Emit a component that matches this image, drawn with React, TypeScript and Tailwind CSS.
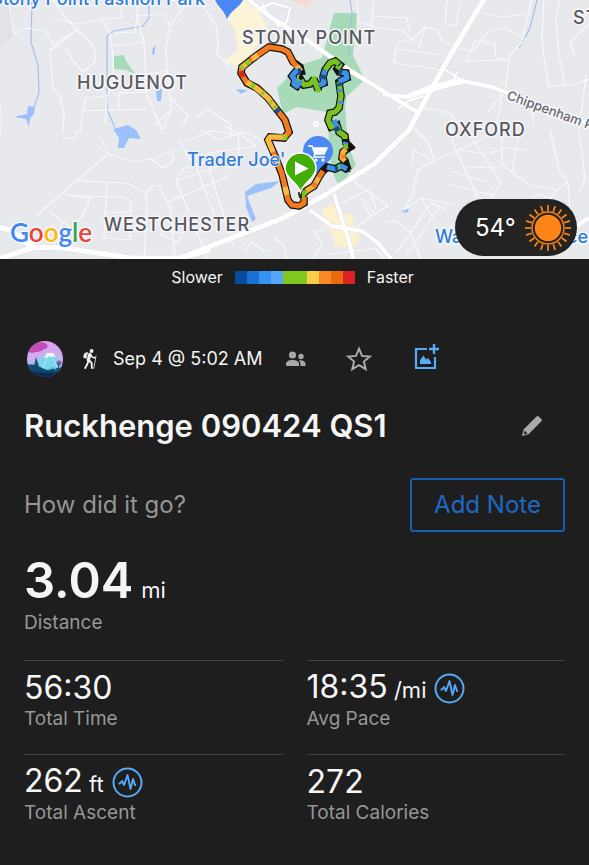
import type { ReactNode } from "react";

const minorRoads = [
  "M8 -2L12 22L14 34L27 28L45 31L54 44L77 30L64 16L52 -2",
  "M54 44L50 51L53 88L60 97L64 112L63 132",
  "M50 51L77 30L90 42L96 52L95 62L83 72L72 60L67 48",
  "M54 18L78 24L102 19L121 18L122 -2M102 19L110 33L113 55L114 80L107 96",
  "M138 -2L137 16L164 14L170 26L182 10L188 -2M137 16L135 32L113 33M137 16L144 42L113 46",
  "M144 42L147 95L162 130M170 26L166 48L167 70L171 111L162 130M147 74L171 70",
  "M119 109L119 93L147 92M82 111L148 109M80 132L85 98L107 96L105 124",
  "M171 98L188 115L181 128M171 111L154 125",
  "M202 5L216 25L218 42L217 54L230 66M196 118L207 109L231 124L230 138",
  "M100 138L108 154L76 181L35 217M108 154L134 162L156 158L171 151L174 160L163 168L150 158",
  "M76 181L127 183L146 193L147 208L144 259M70 196L123 197L131 201L130 240L104 238L107 183",
  "M104 213L131 212M98 222L132 225M65 194L90 198L83 214L73 229L50 212M62 220L60 239",
  "M147 192L153 185L160 186L170 208L175 259M168 202L231 175",
  "M184 168L176 181L183 198L208 259",
  "M184 168L207 162L233 246M176 181L222 165M196 166L220 230M161 234L178 243L183 233L163 230Z",
  "M63 138L75 138L78 131M178 138L190 160L215 152L256 146M185 142L210 131L240 134L256 146",
  "M202 130L218 140L244 132L262 140M244 252L251 242L266 252M275 238L284 245L287 259",
  "M357 -2L358 22L375 27L403 31L412 40L425 27L437 30L443 42L472 52",
  "M374 -2L371 26M372 16L407 18L410 31M447 -2L445 24L456 26L460 2M425 27L418 49",
  "M412 40L399 42L396 48L394 63L437 69M398 49L442 55M480 13L503 17L527 14",
  "M472 52L479 43L489 31L505 28L525 39M466 60L476 40L495 44L496 58L507 60M462 61L507 60",
  "M532 -2L522 42L510 55L505 90L488 112M544 -2L542 36L544 58L549 87L576 84L589 79",
  "M560 -2L556 18L559 54L565 86M575 57L570 42L589 24M586 75L581 115",
  "M424 108L450 113L457 123M502 94L497 124L505 137M507 95L529 98L534 122",
  "M412 126L429 143L434 161L418 170L412 195L404 210M434 161L480 140L497 132",
  "M412 165L413 150L431 159M451 128L453 143L480 202M459 150L487 154L505 148L526 150",
  "M471 137L484 156L501 183L484 207M453 172L487 182M447 184L492 195M469 167L500 168",
  "M502 130L502 165L530 185L557 190L568 182L559 170L550 130M512 172L520 130",
  "M568 182L570 213M557 190L551 198L537 194L530 203M579 130L585 179L579 193",
  "M348 177L388 206L375 214L364 200M354 197L372 188M341 204L362 193M356 228L374 214M370 192L376 209M361 199L370 216",
  "M384 223L396 221L410 232L421 259M404 210L421 198L455 205M421 198L433 217M397 252L431 203L447 210M406 255L440 207",
  "M313 259L322 244L315 232L326 230M325 255L375 248L385 259",
  "M0 105L0 135M225 126L238 133L239 156L227 166",
];

const mainRoads: { d: string; w: number }[] = [
  { d: "M247 -2L270 17L300 35L349 70L417 112", w: 4 },
  { d: "M485 -2L470 22L443 68L409 130L374 164L325 195L283 218L180 258", w: 5 },
  { d: "M383 94L406 97L463 81L492 87L589 124", w: 4 },
  { d: "M398 109L409 101L424 96M443 68L463 81M446 82L454 80L457 72", w: 2 },
  { d: "M408 97L430 88L463 81", w: 6 },
  { d: "M-2 259L35 247L64 248L130 258L180 258L210 250M-2 227L10 230L35 247M35 247L14 238", w: 5 },
  { d: "M310 210L332 226L362 231L377 242L391 259M334 194L350 245L353 259", w: 4 },
  { d: "M573 228L589 218", w: 4 },
  { d: "M262 4L271 18L280 21M257 10L272 3L290 8L287 22L278 26L270 14", w: 2 },
];

const loop =
  "M301 197L306 191L314 186L319 177L323 171L327 167L335 169L341 166L348 170L345 161L342 158L343 152L350 147L346 143L345 136L339 132L337 125L331 127L328 120L330 113L335 112L339 108L341 96L339 82L342 80L347 78L346 73L339 72L337 69L340 65L335 61L330 63L325 70L323 77L324 83L319 85L318 90L314 79L310 84L304 85L301 80L297 86L294 84L295 80L292 76L296 71L301 71L300 67L293 62L288 52L282 49L269 47L256 56L242 67L241 73L247 83L257 88L268 98L278 111L285 120L289 132L284 138L270 137L268 140L275 156L282 174L288 200L292 205L299 206L304 203L304 197";

const pace: { c: string; d: string }[] = [
  { c: "#f47a20", d: "M300 70L293 62L288 52L282 49L269 47L256 56L242 67L241 73L247 83L257 88L268 98L278 111L285 120L289 132L284 138L270 137L268 140L275 156L282 174L288 200L292 205L299 206L304 203L304 197" },
  { c: "#f9bb45", d: "M301 71L297 66M258 55L252 59M246 64L242 68M247 82L256 88L268 98L276 109M287 137L270 137L268 140L273 152M285 187L287 195" },
  { c: "#8acb2c", d: "M250 61L246 64M251 85L255 87M262 92L264 94M270 101L272 103M274 106L276 108M287 137L283 138M243 66L241 69" },
  { c: "#d92822", d: "M241 71L243 77" },
  { c: "#194f94", d: "M276 109L279 112" },
  { c: "#79c21f", d: "M301 197L306 191M337 125L331 127L328 120L330 113L335 112L339 108L341 96L339 82M345 139L345 136L339 132L337 125M337 69L340 65L335 61L330 63L325 70M319 88L318 90L314 79L310 84L304 85L301 80" },
  { c: "#fbb03b", d: "M306 191L314 186L319 177M345 161L342 158L343 152L346 149" },
  { c: "#f47a20", d: "M319 177L323 171M316 183L313 187M344 158L343 155" },
  { c: "#3e91e9", d: "M327 167L335 169L341 166L347 169M339 82L342 80L347 78L346 73L339 72M325 70L323 77L324 83L319 85M301 80L297 86L294 84L295 80L292 76L296 71L301 71M334 120L337 127M341 104L341 101M340 92L340 89M345 145L346 142" },
  { c: "#144c91", d: "M324 75L323 79M340 86L339 83M339 72L342 73M298 71L301 71M335 169L338 168M340 65L339 64M336 127L338 131" },
  { c: "#79c21f", d: "M338 167L340 167M297 79L299 79M344 147L348 146" },
];

const blueLabel = "#2f7cd8";

function TrailMap() {
  return (
    <svg
      viewBox="0 0 589 259"
      preserveAspectRatio="xMidYMid slice"
      className="block h-[259px] w-full font-['Inter',sans-serif]"
      role="img"
      aria-label="Activity route map"
    >
      <rect width="589" height="259" fill="#e8e9ed" />
      <path d="M0 0H11L14 34L0 50Z" fill="#e2e3e6" />
      <path d="M213 0H253L262 17L268 30L258 44L240 66L223 62L238 50L234 28Z" fill="#fcf4d8" />
      <path d="M322 208L334 205L337 215L351 213L355 228L360 238L355 246L334 247L333 234L325 226ZM306 183L315 187L309 200Z" fill="#fcf1cd" />
      <path d="M290 0H314L308 8L300 5Z" fill="#f5dbd7" />
      <path d="M334 13H357L356 32L353 55L365 80L347 96L345 106L348 145L356 165L339 187L331 168L327 112L297 107L283 114L277 88L300 65L322 58Z" fill="#a7dab6" />
      <path d="M114 56L124 55L126 61L135 74L126 70L114 69Z" fill="#a7dab6" />
      <g fill="#9bc0fb">
        <path d="M14 117L27 114L28 106L35 107L34 114L30 118L29 127L26 119Z" />
        <path d="M153 48L156 45L154 55L152 54ZM156 89L162 89L161 101H157ZM236 89L248 90L241 94Z" />
        <path d="M113 129L128 125L136 130L141 139L129 138L124 148H118L119 138Z" />
        <path d="M245 192L256 184L280 181L271 188L247 196L256 219L252 222L246 207Z" />
        <path d="M401 211L409 208L407 213Z" />
      </g>
      <g fill="none" stroke="#a3bfe9" strokeWidth="1.2">
        <path d="M32 0L31 42L38 65L39 93L34 107" />
        <path d="M149 0L149 18L143 26L114 31L107 36L107 109L115 128" />
        <path d="M350 0L352 12L349 55M537 0L530 28L519 48" />
      </g>
      <g fill="none" stroke="#f8f9fb" strokeWidth="1.2" strokeLinejoin="round">
        {minorRoads.map((d) => (
          <path key={d} d={d} />
        ))}
      </g>
      {mainRoads.map((r) => (
        <path key={r.d} d={r.d} fill="none" stroke="#dddfe5" strokeWidth={r.w + 1} strokeLinejoin="round" />
      ))}
      {mainRoads.map((r) => (
        <path key={r.d} d={r.d} fill="none" stroke="#ffffff" strokeWidth={r.w} strokeLinejoin="round" />
      ))}
      <circle cx="316" cy="124" r="2" fill="none" stroke="#fff" strokeWidth="1.5" />
      <path d="M215 0H243C240 7 231 10 227 19C224 10 218 7 215 0Z" fill="#4a89f3" />

      <g paintOrder="stroke" stroke="#f6f7fa" strokeWidth="3" strokeLinejoin="round">
        <g fill="#58595d" fontSize="18" fontWeight="500" letterSpacing="1">
          <text x="242" y="44">STONY POINT</text>
          <text x="77" y="89">HUGUENOT</text>
          <text x="445" y="136">OXFORD</text>
          <text x="104" y="231">WESTCHESTER</text>
          <text x="573" y="24">ST</text>
        </g>
        <text x="506" y="99" fill="#66676b" fontSize="13" fontWeight="500" transform="rotate(20 506 99)">
          Chippenham Pkwy
        </text>
        <g fill={blueLabel} fontSize="18" fontWeight="500">
          <text x="205" y="5" textAnchor="end">Stony Point Fashion Park</text>
          <text x="435" y="243">Wa</text>
          <text x="567" y="243">ce</text>
        </g>
        <text x="10" y="242" fontSize="26" fontWeight="600" className="font-['Lato',sans-serif]">
          <tspan fill="#4285f4">G</tspan>
          <tspan fill="#ea4335">o</tspan>
          <tspan fill="#fbbc05">o</tspan>
          <tspan fill="#4285f4">g</tspan>
          <tspan fill="#34a853">l</tspan>
          <tspan fill="#ea4335">e</tspan>
        </text>
      </g>

      <g>
        <path d="M318 136A15 15 0 0 1 333 151C333 161 323 164 318 176C313 164 303 161 303 151A15 15 0 0 1 318 136Z" fill="#4a89f3" />
        <path d="M308 146H312L315 154H324L327 148H313M315 154L314 157H325" fill="none" stroke="#fff" strokeWidth="1.6" />
        <path d="M313 148H327L324 154H315Z" fill="#fff" />
        <circle cx="316" cy="160" r="1.6" fill="#fff" />
        <circle cx="323" cy="160" r="1.6" fill="#fff" />
      </g>

      <path d={loop} fill="none" stroke="#14130f" strokeWidth="7.6" strokeLinejoin="miter" strokeMiterlimit="2" />
      <path d="M346 140L355 149L347 152ZM343 164L351 172L342 171Z" fill="#14130f" />
      {pace.map((p, i) => (
        <path key={i} d={p.d} fill="none" stroke={p.c} strokeWidth="5.2" strokeLinejoin="round" />
      ))}
      <text x="187" y="166" fill={blueLabel} fontSize="18" fontWeight="500" paintOrder="stroke" stroke="#f6f7fa" strokeWidth="1.5">
        Trader Joe&#39;
      </text>
      <path d="M298 192H302V198H299Z" fill="#24300f" />
      <path
        d="M300 153A15.500 15.500 0 0 1 316 168.500C316 178 304 182 300.500 192C297 182 285 178 285 168.500A15.500 15.500 0 0 1 300 153Z"
        fill="#41ad06"
        stroke="#fff"
        strokeWidth="1.600"
      />
      <path d="M295 161.500L308.500 168.500L295 175.500Z" fill="#fff" />
    </svg>
  );
}

function Sun() {
  return (
    <svg viewBox="0 0 48 48" className="size-12" aria-hidden="true">
      <circle cx="24" cy="24" r="13.2" fill="#ff8516" />
      <circle cx="24" cy="24" r="16" fill="none" stroke="#ff8516" strokeWidth="1.4" />
      {Array.from({ length: 20 }, (_, i) => (
        <path key={i} d="M24 7V1" stroke="#ff8516" strokeWidth="1.7" transform={`rotate(${i * 18} 24 24)`} />
      ))}
    </svg>
  );
}

function Avatar() {
  return (
    <svg viewBox="0 0 36 36" className="size-9 shrink-0" role="img" aria-label="Profile picture">
      <defs>
        <clipPath id="face">
          <circle cx="18" cy="18" r="18" />
        </clipPath>
        <linearGradient id="sky" x1="0" y1="0" x2="0" y2="1">
          <stop offset="0" stopColor="#dd9df0" />
          <stop offset="0.5" stopColor="#cbb0f0" />
          <stop offset="1" stopColor="#5cc8df" />
        </linearGradient>
      </defs>
      <g clipPath="url(#face)">
        <rect width="36" height="36" fill="url(#sky)" />
        <path d="M20 12H26L36 23V30H7V22Z" fill="#7fd3ea" />
        <path d="M20 12H26L29 16L26 15L25 17L22 15L20 17L17 16Z" fill="#eefaff" />
        <path d="M20 18L15 28M26 18L31 27" stroke="#a6e8f2" />
        <path d="M1 9C4 2 12 0 18 2C22 4 21 8 17 8C14 12 8 10 6 12C3 12 1 11 1 9Z" fill="#c24fb8" />
        <path d="M9 16L12 25H7Z" fill="#175273" />
        <path d="M0 24C8 22 14 27 20 29L36 26V36H0Z" fill="#104a70" />
        <path d="M0 30C12 31 24 34 36 29V36H0Z" fill="#0a2c4e" />
        <path d="M22 29C24 26 28 26 29 29" fill="none" stroke="#57b7cb" strokeWidth="1.3" />
        <circle cx="32" cy="22" r="2.500" fill="#9855b5" />
        <path d="M32 22L31 28" stroke="#1c4e72" />
      </g>
    </svg>
  );
}

function Hiker() {
  return (
    <svg viewBox="0 0 14 20" className="ml-5 h-5 w-[14px] shrink-0" fill="none" stroke="#f5f5f5" strokeLinecap="round" strokeLinejoin="round" role="img" aria-label="Hiking">
      <circle cx="8.600" cy="2" r="1.900" fill="#f5f5f5" stroke="none" />
      <path d="M4.300 3.500L1.600 4.600L0.600 8.300L2.800 9.200Z" fill="#f5f5f5" strokeWidth="0.800" />
      <path d="M6.800 5.500L5.300 11" strokeWidth="3.200" />
      <path d="M7.500 5.500L9.300 8.200L12 8.700" strokeWidth="1.500" />
      <path d="M5.500 11.500L4.500 14.800L2.200 19" strokeWidth="1.900" />
      <path d="M6.200 11.500L8.600 14L8.900 19" strokeWidth="1.900" />
      <path d="M13 7L10.800 19.500" strokeWidth="0.800" />
    </svg>
  );
}

function PulseBadge({ label }: { label: string }) {
  return (
    <button type="button" aria-label={label} className="ml-2 block size-[31px] shrink-0">
      <svg viewBox="0 0 31 31" className="size-full" fill="none" stroke="#56a8f8">
        <circle cx="15.500" cy="15.500" r="14" strokeWidth="2" />
        <path d="M6.500 16.500H8L10 14L12 18L15.500 8L18.500 22L21 12L23 18H24" strokeWidth="1.900" strokeLinejoin="round" />
      </svg>
    </button>
  );
}

function Stat({ value, unit, label, badge }: { value: string; unit?: string; label: string; badge?: ReactNode }) {
  return (
    <div className="flex flex-col border-t border-[#454545] pb-[22px]">
      <dt className="order-2 text-[19px] leading-[26px] text-[#979797]">{label}</dt>
      <dd className="mt-[9px] flex h-9 items-center">
        <span className="text-[32px] leading-9 text-[#f7f7f7]">
          {value}
          {unit && <span className="text-[22px]"> {unit}</span>}
        </span>
        {badge}
      </dd>
    </div>
  );
}

const scale = [
  "bg-[#054c9f]",
  "bg-[#1b72d1]",
  "bg-[#3693f3]",
  "bg-[#54a7fb]",
  "bg-[#80c81f]",
  "bg-[#80c81f]",
  "bg-[#fccb49]",
  "bg-[#f98a27]",
  "bg-[#ec6a10]",
  "bg-[#d92224]",
];

export default function App() {
  return (
    <main className="min-h-screen bg-[#1e1e1e] font-['Inter',sans-serif] text-[#f5f5f5]">
      <div className="relative">
        <TrailMap />
        <div className="absolute right-3 bottom-[3px] flex h-[57px] w-[122px] items-center justify-between rounded-full bg-[#222322] pr-[5px] pl-5">
          <span className="text-2xl text-white">54°</span>
          <Sun />
        </div>
      </div>

      <div className="flex h-9 items-center justify-center gap-3 pr-1 text-base">
        <span>Slower</span>
        <div className="flex h-[13px]">
          {scale.map((c, i) => (
            <span key={i} className={`w-3 ${c}`} />
          ))}
        </div>
        <span>Faster</span>
      </div>

      <section className="px-6 pt-9">
        <div className="flex h-14 items-center pl-[3px]">
          <Avatar />
          <Hiker />
          <time className="ml-4 text-lg">Sep 4 @ 5:02 AM</time>
          <svg viewBox="0 0 20 16" className="ml-6 h-4 w-5" fill="#a8a8a8" role="img" aria-label="Visible to connections">
            <circle cx="6.500" cy="4" r="3.600" />
            <path d="M0 15V13C0 10.500 3 9 6.500 9S13 10.500 13 13V15Z" />
            <circle cx="15" cy="5.500" r="2.700" />
            <path d="M14.500 15V13C14.500 11.500 13.800 10.300 12.800 9.400C16 8.800 19.500 10.500 19.500 13V15Z" />
          </svg>
          <button type="button" aria-label="Favorite" className="ml-10">
            <svg viewBox="0 0 24 24" className="block size-[26px]" fill="none" stroke="#acacac" strokeWidth="1.800">
              <path d="M12 2.500L14.800 9.100L22 9.700L16.500 14.400L18.200 21.400L12 17.700L5.800 21.400L7.500 14.400L2 9.700L9.200 9.100Z" />
            </svg>
          </button>
          <button type="button" aria-label="Add photo" className="ml-10 pb-1">
            <svg viewBox="0 0 28 28" className="block size-7" fill="none" stroke="#58abf9">
              <path d="M15 6H4V25H23V14" strokeWidth="2.200" />
              <path d="M22 1V11M17 6H27" strokeWidth="2.400" />
              <path d="M8 21V17L11.500 12.500L14 16.500L16 15L19 19V21Z" fill="#58abf9" stroke="none" />
            </svg>
          </button>
        </div>

        <div className="mt-4 flex h-[46px] items-center justify-between pr-[22px]">
          <h1 className="text-[31px] leading-10 font-semibold">Ruckhenge 090424 QS1</h1>
          <button type="button" aria-label="Edit name">
            <svg viewBox="0 0 22 22" className="block size-[22px]" fill="#a9a9a9">
              <path d="M1 21L2.500 14.500L15 2C16.500 0.500 17 0.800 18 1.700L20.300 4C21.300 5 21 5.800 20 6.800L7.500 19.300Z" />
              <path d="M3.500 15.500L6.500 18.500L2.800 19.200Z" fill="#1e1e1e" />
            </svg>
          </button>
        </div>

        <div className="mt-[29px] flex items-center justify-between">
          <p className="text-2xl text-[#959595]">How did it go?</p>
          <button
            type="button"
            className="h-[54px] w-[155px] rounded-[3px] border-2 border-[#175ead] text-2xl text-[#1d69c6]"
          >
            Add Note
          </button>
        </div>

        <dl>
          <div className="flex flex-col pt-5 pb-[23px]">
            <dt className="order-2 text-[19px] leading-7 text-[#979797]">Distance</dt>
            <dd className="flex items-baseline gap-2 text-[49px] leading-[57px] font-semibold">
              3.04 <span className="text-[22px] leading-8 font-normal">mi</span>
            </dd>
          </div>
          <div className="grid grid-cols-2 gap-x-6">
            <Stat value="56:30" label="Total Time" />
            <Stat value="18:35" unit="/mi" label="Avg Pace" badge={<PulseBadge label="Pace chart" />} />
            <Stat value="262" unit="ft" label="Total Ascent" badge={<PulseBadge label="Elevation chart" />} />
            <Stat value="272" label="Total Calories" />
          </div>
        </dl>
      </section>
    </main>
  );
}
